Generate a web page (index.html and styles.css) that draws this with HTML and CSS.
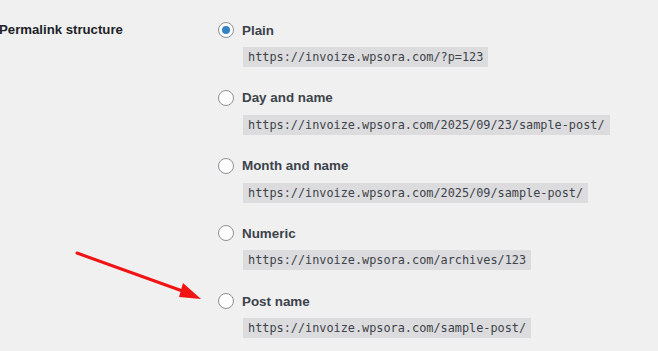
FILE: index.html
```html
<!DOCTYPE html>
<html lang="en">
<head>
<meta charset="utf-8">
<title>Permalink Settings</title>
<link rel="stylesheet" href="styles.css">
</head>
<body>
<div class="form-row">
  <div class="th">Permalink structure</div>
  <fieldset class="options">
    <div class="option">
      <label class="choice"><span class="radio checked"></span><span class="label-text">Plain</span></label>
      <code>https://invoize.wpsora.com/?p=123</code>
    </div>
    <div class="option">
      <label class="choice"><span class="radio"></span><span class="label-text">Day and name</span></label>
      <code>https://invoize.wpsora.com/2025/09/23/sample-post/</code>
    </div>
    <div class="option">
      <label class="choice"><span class="radio"></span><span class="label-text">Month and name</span></label>
      <code>https://invoize.wpsora.com/2025/09/sample-post/</code>
    </div>
    <div class="option">
      <label class="choice"><span class="radio"></span><span class="label-text">Numeric</span></label>
      <code>https://invoize.wpsora.com/archives/123</code>
    </div>
    <div class="option">
      <label class="choice"><span class="radio"></span><span class="label-text">Post name</span></label>
      <code>https://invoize.wpsora.com/sample-post/</code>
    </div>
  </fieldset>
</div>
<svg class="arrow" width="658" height="351" viewBox="0 0 658 351">
  <line x1="77" y1="253" x2="188" y2="293" stroke="#f01414" stroke-width="3" stroke-linecap="round"/>
  <polygon points="201,299 183,283 179,297" fill="#f01414"/>
</svg>
</body>
</html>
```
FILE: styles.css
```css
html, body {
  margin: 0;
  padding: 0;
  background: #f0f0f1;
  width: 658px;
  height: 351px;
  overflow: hidden;
  font-family: "Liberation Sans", Arial, sans-serif;
  color: #1d2327;
}

.form-row {
  display: flex;
  padding-top: 20px;
  margin-left: -1px;
}

.th {
  width: 219px;
  font-size: 13.2px;
  font-weight: 700;
  line-height: 20px;
  color: #1d2327;
}

.options {
  margin: 0;
  padding: 0;
  border: 0;
  display: flex;
  flex-direction: column;
  gap: 20.75px;
}

.option {
  display: flex;
  flex-direction: column;
  align-items: flex-start;
}

.choice {
  display: flex;
  align-items: center;
  height: 20px;
  gap: 8px;
}

.radio {
  box-sizing: border-box;
  width: 16px;
  height: 16px;
  border: 1px solid #8c8f94;
  border-radius: 50%;
  background: #fff;
  display: flex;
  align-items: center;
  justify-content: center;
}

.radio.checked::before {
  content: "";
  width: 8px;
  height: 8px;
  border-radius: 50%;
  background: #3582c4;
}

.label-text {
  font-size: 13.4px;
  font-weight: 700;
  color: #3c434a;
}

code {
  margin: 7px 0 0 25px;
  padding: 0 5px;
  height: 20px;
  line-height: 20px;
  background: #dcdcde;
  font-family: "DejaVu Sans Mono", "Liberation Mono", monospace;
  font-size: 11.85px;
  color: #3c434a;
}

.arrow {
  position: absolute;
  left: 0;
  top: 0;
  pointer-events: none;
}
```
